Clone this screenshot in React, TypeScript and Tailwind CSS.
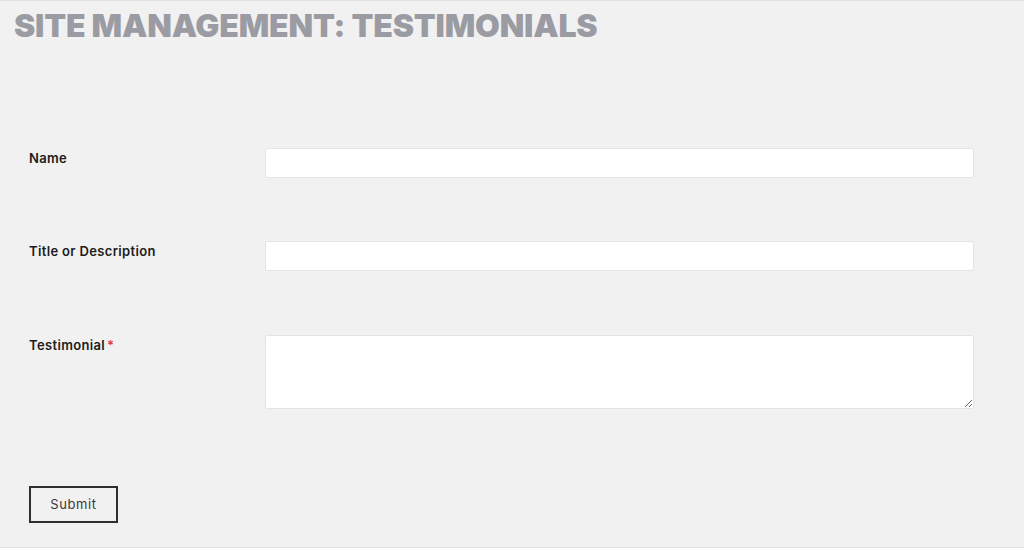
import React from "react";

const fields = [
  { id: "name", label: "Name", required: false, multiline: false },
  { id: "title", label: "Title or Description", required: false, multiline: false },
  { id: "testimonial", label: "Testimonial", required: true, multiline: true },
];

export default function App() {
  return (
    <div className="h-[548px] bg-[#f1f1f1] border-t border-b border-[#e2e2e2] font-['Inter',sans-serif] overflow-hidden">
      <h1 className="px-[14px] pt-[5px] font-['Inter',sans-serif] font-black text-[32px] leading-[40px] tracking-[-0.2px] text-[#9b9ca3] uppercase">
        Site Management: Testimonials
      </h1>

      <form className="pl-[29px] pr-[50px] pt-[102px] flex flex-col">
        {fields.map((f, idx) => (
          <div
            key={f.id}
            className={`grid grid-cols-[236px_1fr] ${idx === 0 ? "" : idx === 1 ? "mt-[63px]" : "mt-[64px]"}`}
          >
            <label
              htmlFor={f.id}
              className="pt-[1px] text-[13px] leading-[18px] font-semibold tracking-[0.35px] text-[#1c1c1c]"
            >
              {f.label}
              {f.required && <span className="ml-[2px] text-[#d23b3b]">*</span>}
            </label>
            {f.multiline ? (
              <textarea
                id={f.id}
                className="h-[74px] bg-white border border-[#e4e4e4] rounded-[2px] resize-y"
              />
            ) : (
              <input
                id={f.id}
                type="text"
                className="h-[30px] bg-white border border-[#e4e4e4] rounded-[2px]"
              />
            )}
          </div>
        ))}

        <div className="mt-[77px]">
          <button
            type="button"
            className="w-[89px] h-[37px] border-2 border-[#2e2e2e] text-[13px] tracking-[0.6px] text-[#3a3a3a] bg-transparent"
          >
            Submit
          </button>
        </div>
      </form>
    </div>
  );
}
